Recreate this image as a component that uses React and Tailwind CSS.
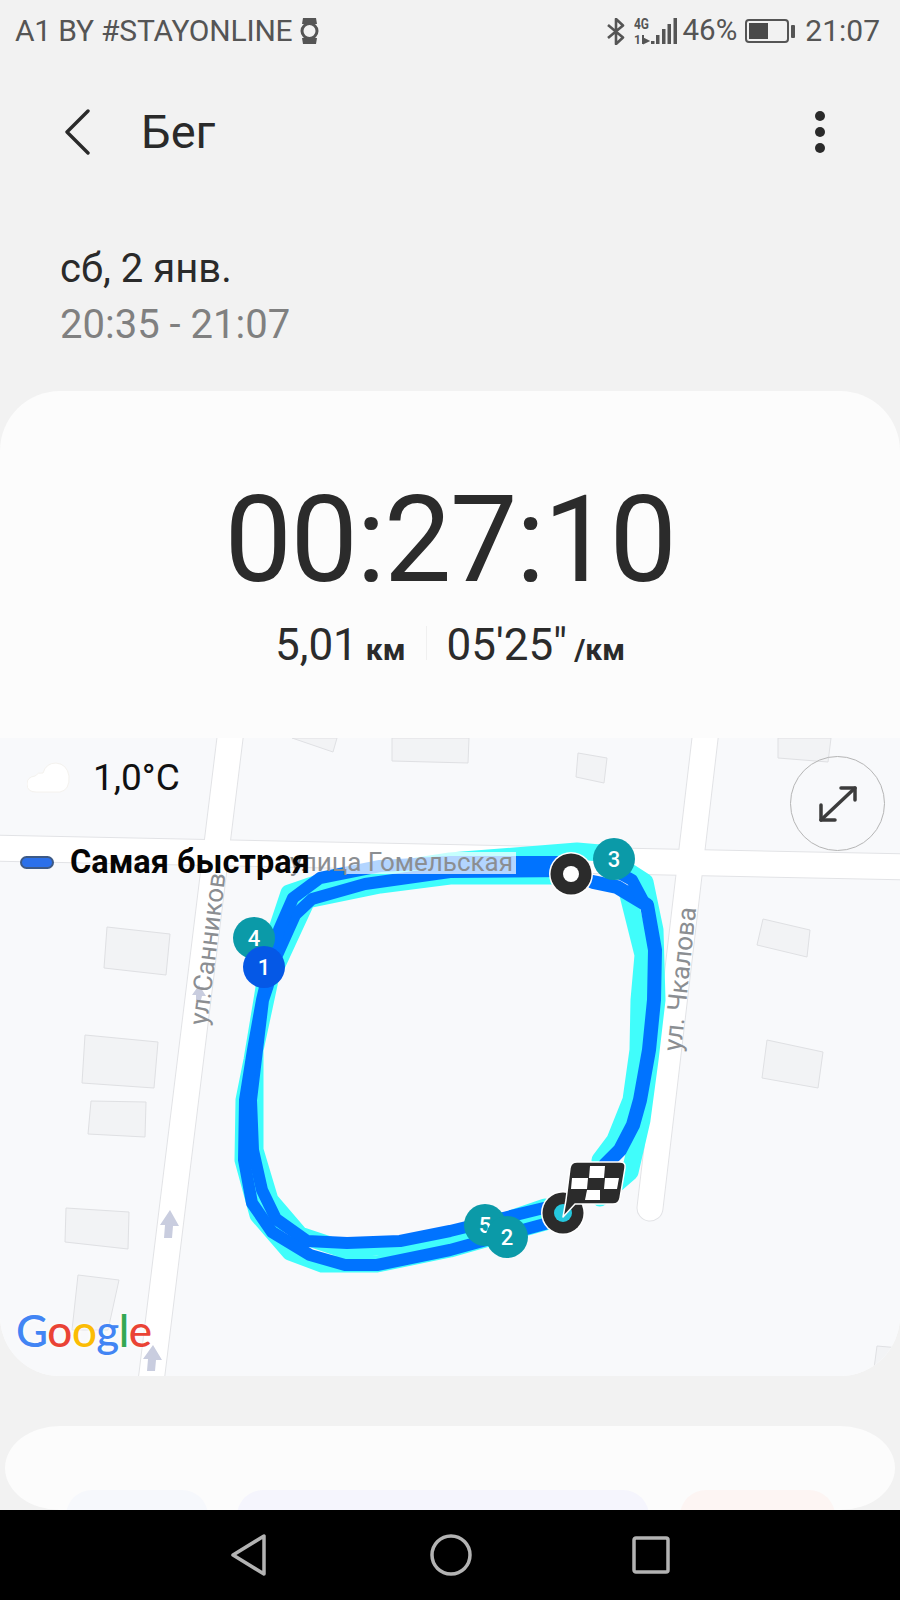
const roads = ["M231 730 L150 1390", "M706 730 L650 1208", "M-10 848 L910 867"]

const buildings = [
  "292,738 333,752 337,738",
  "392,738 469,738 468,763 392,761",
  "578,753 607,758 604,783 576,777",
  "778,738 831,738 828,762 778,758",
  "763,919 810,930 807,957 757,945",
  "767,1040 823,1052 818,1088 762,1078",
  "107,927 170,934 166,975 104,968",
  "85,1035 158,1042 154,1088 82,1083",
  "91,1101 146,1102 145,1137 88,1134",
  "66,1208 129,1212 128,1249 65,1242",
  "78,1275 119,1280 108,1330 72,1330",
  "877,1346 900,1348 900,1376 873,1376",
]

const Pin = ({ x, y, n, color = "#0b9aa8" }) => (
  <g>
    <circle cx={x} cy={y} r="21" fill={color} />
    <text x={x} y={y + 8} textAnchor="middle" fontSize="22" fontWeight="500" fill="#ffffff" fontFamily="Roboto, sans-serif">{n}</text>
  </g>
)

const RouteMap = () => (
  <svg viewBox="0 738 900 638" className="block w-[900px] h-[638px]">
    <rect x="0" y="738" width="900" height="638" fill="#f8f9fb" />
    {roads.map((d) => (
      <path key={d} d={d} fill="none" stroke="#e2e3e6" strokeWidth="27" strokeLinecap="round" />
    ))}
    {roads.map((d) => (
      <path key={d + "w"} d={d} fill="none" stroke="#ffffff" strokeWidth="25" strokeLinecap="round" />
    ))}
    {buildings.map((p) => (
      <polygon key={p} points={p} fill="#f2f3f5" stroke="#dfe0e3" strokeWidth="1" />
    ))}
    <path d="M170 1210 L179 1226 L173 1226 L172 1238 L164 1238 L165 1225 L160 1225 Z" fill="#c9cddf" />
    <path d="M153 1345 L162 1360 L156 1360 L155 1371 L147 1371 L148 1359 L143 1359 Z" fill="#c9cddf" />
    <path d="M199 985 L206 996 L202 996 L201 1000 L196 1000 L196 995 L192 995 Z" fill="#c9cddf" />

    <text transform="translate(207 1026) rotate(-83)" fontSize="26" fill="#8b8e92" fontFamily="Roboto, sans-serif">ул.Санников</text>
    <text transform="translate(681 1052) rotate(-84)" fontSize="26" fill="#8b8e92" fontFamily="Roboto, sans-serif">ул. Чкалова</text>

    <g fill="none" stroke="#40fdfb" strokeWidth="17" strokeLinejoin="round" strokeLinecap="round">
      <path d="M545 1222 L450 1249 L377 1264 L322 1264 L290 1252 L258 1215 L243 1160 L244 1100 L252 1060 L262 1000 L270 950 L289 893 L327 880 L450 861 L577 851 L600 853 L645 882 L655 930 L657 1000 L650 1060 L642 1120 L630 1172 L600 1198" />
      <path d="M628 895 L643 955 L639 1000 L638 1050 L631 1100 L615 1140 L600 1160" />
      <path d="M545 1207 L450 1240 L345 1250 L300 1235 L270 1200 L255 1150 L255 1050 L270 980 L307 900 L380 885 L450 876 L560 876" />
    </g>
    <g fill="none" stroke="#0073ff" strokeWidth="12" strokeLinejoin="round" strokeLinecap="round">
      <path d="M548 1207 L450 1231 L400 1241 L347 1243 L307 1241 L276 1219 L262 1190 L253 1150 L251 1100 L257 1050 L263 1000 L268 985 L277 955 L295 915 L312 899 L365 884 L450 872 L570 871" />
      <path d="M552 1222 L450 1250 L377 1265 L345 1265 L310 1255 L272 1232 L252 1203 L244 1160 L245 1100 L253 1050 L262 1000 L268 975 L279 930 L293 898 L320 878 L380 866 L450 862 L570 862" />
      <path strokeWidth="14" d="M593 882 L617 887 L647 905 L655 950 L654 1000 L649 1050 L640 1100 L633 1125 L620 1150 L605 1165" />
      <path d="M610 868 L632 880 L648 910" />
    </g>

    <rect x="345" y="852" width="171" height="22" fill="#ffffff" opacity="0.7" />
    <text x="290" y="871" fontSize="26" fill="#8b8e92" fontFamily="Roboto, sans-serif">улица Гомельская</text>

    <Pin x={614} y={859} n="3" />
    <circle cx="571" cy="874" r="22" fill="#ffffff" />
    <circle cx="571" cy="874" r="20.5" fill="#2b2b2b" />
    <circle cx="571" cy="874" r="8" fill="#ffffff" />

    <Pin x={254} y={938} n="4" />
    <Pin x={264} y={967} n="1" color="#0558e6" />
    <Pin x={485} y={1225} n="5" />
    <Pin x={507} y={1237} n="2" />

    <circle cx="563" cy="1213" r="22" fill="#ffffff" />
    <circle cx="563" cy="1213" r="20.5" fill="#2b2b2b" />
    <circle cx="563" cy="1213" r="9" fill="#25c8de" />
    <path d="M577 1162 L620 1162 Q626 1162 625 1168 L620 1198 Q619 1204 613 1204 L575 1204 L563 1217 L566 1200 L570 1168 Q571 1162 577 1162 Z" fill="#2b2b2b" stroke="#ffffff" strokeWidth="1.5" strokeLinejoin="round" />
    <g fill="#ffffff">
      <polygon points="590,1166 605,1166 604,1178 589,1178" />
      <polygon points="572,1178 588,1178 587,1189 571,1189" />
      <polygon points="605,1178 619,1178 617,1189 604,1189" />
      <polygon points="587,1190 600,1190 600,1200 585,1200" />
    </g>
  </svg>
)

const Legend = () => (
  <div className="absolute left-[20px] top-[104px] flex items-center gap-[16px]">
    <span className="w-[34px] h-[13px] rounded-full bg-[#2b70ea] border-2 border-[#3d5a86]" />
    <span className="text-[32.5px] leading-[40px] font-bold text-[#050505]">Самая быстрая</span>
  </div>
)

const Weather = () => (
  <div className="absolute left-[27px] top-[18px] flex items-center gap-[23px]">
    <svg width="43" height="32" viewBox="0 0 43 32">
      <path d="M9 30 Q0 30 0 22 Q0 15 8 14 Q11 10 16 11 Q19 1 29 1 Q40 2 42 14 Q43 28 33 30 Z" fill="#ffffff" stroke="#f4f2ee" strokeWidth="1" />
    </svg>
    <span className="text-[37px] leading-[44px] text-[#111111]">1,0°C</span>
  </div>
)

const ExpandButton = () => (
  <button className="absolute left-[790px] top-[18px] w-[95px] h-[95px] rounded-full border border-[#b5b5b5] flex items-center justify-center">
    <svg width="40" height="38" viewBox="0 0 40 38" fill="none" stroke="#3c3c3c" strokeWidth="3.5" strokeLinecap="round" strokeLinejoin="round">
      <path d="M3 35 L37 3" />
      <path d="M23 3 L37 3 L37 15" />
      <path d="M3 20 L3 35 L17 35" />
    </svg>
  </button>
)

const GoogleLogo = () => (
  <div className="absolute left-[16px] top-[564px] text-[44px] leading-[56px] font-['Lato',sans-serif] font-medium tracking-[-0.5px] [text-shadow:0_0_4px_#fff]">
    <span className="text-[#4285f4]">G</span>
    <span className="text-[#ea4335]">o</span>
    <span className="text-[#fbbc05]">o</span>
    <span className="text-[#4285f4]">g</span>
    <span className="text-[#34a853]">l</span>
    <span className="text-[#ea4335]">e</span>
  </div>
)

const StatusBar = () => (
  <div className="h-[62px] pl-[15px] pr-[20px] flex items-center justify-between text-[#555555] text-[30px]">
    <div className="flex items-center gap-[8px]">
      <span className="leading-[36px] tracking-[-0.2px]">A1 BY #STAYONLINE</span>
      <svg width="19" height="26" viewBox="0 0 19 26">
        <path d="M3 0 H16 L17 6 H2 Z M2 20 H17 L16 26 H3 Z" fill="#555555" />
        <circle cx="9.5" cy="13" r="7.5" fill="none" stroke="#555555" strokeWidth="3" />
      </svg>
    </div>
    <div className="flex items-center">
      <svg width="18" height="27" viewBox="0 0 18 27" fill="none" stroke="#555555" strokeWidth="2.6" strokeLinejoin="round" className="mr-[9px]">
        <path d="M1 7 L16 19.5 L9 26 V1 L16 7.5 L1 20" />
      </svg>
      <svg width="43" height="32" viewBox="0 0 43 32" className="mr-[6px] mb-[-4px]">
        <text x="0" y="12" fontSize="14" fontWeight="700" fill="#555555" fontFamily="Roboto, sans-serif" textLength="15" lengthAdjust="spacingAndGlyphs">4G</text>
        <text x="0" y="27" fontSize="12" fontWeight="700" fill="#555555" fontFamily="Roboto, sans-serif">1</text>
        <path d="M9 18 V27 M10 22 L14 24 L10 26 Z" stroke="#555555" strokeWidth="2" fill="#555555" />
        <rect x="17" y="24" width="3.5" height="3" fill="#555555" />
        <rect x="22" y="18" width="3.5" height="9" fill="#555555" />
        <rect x="28" y="12" width="3.5" height="15" fill="#555555" />
        <rect x="33.5" y="7" width="3.5" height="20" fill="#555555" />
        <rect x="39.5" y="1" width="3.5" height="26" fill="#555555" />
      </svg>
      <span className="text-[29.5px] leading-[36px] mb-[2px]">46%</span>
      <div className="ml-[8px] w-[44px] h-[24px] rounded-[4px] border-2 border-[#555555] p-[2px] flex">
        <span className="w-[19px] bg-[#4a4a4a]" />
      </div>
      <span className="ml-[2px] w-[4px] h-[13px] rounded-[1px] bg-[#555555]" />
      <span className="ml-[10px] leading-[36px]">21:07</span>
    </div>
  </div>
)

const Header = () => (
  <div className="h-[140px] pl-[65px] pr-[75px] flex items-center justify-between">
    <div className="flex items-center gap-[51px]">
      <svg width="25" height="46" viewBox="0 0 25 46" fill="none" stroke="#2a2a2a" strokeWidth="3.4" strokeLinecap="round" strokeLinejoin="round">
        <path d="M23 2 L2 23 L23 44" />
      </svg>
      <span className="text-[47px] leading-[56px] text-[#2a2a2a]">Бег</span>
    </div>
    <div className="flex flex-col gap-[6px]">
      <span className="w-[10px] h-[10px] rounded-full bg-[#2a2a2a]" />
      <span className="w-[10px] h-[10px] rounded-full bg-[#2a2a2a]" />
      <span className="w-[10px] h-[10px] rounded-full bg-[#2a2a2a]" />
    </div>
  </div>
)

const Summary = () => (
  <div className="h-[347px] flex flex-col items-center">
    <div className="mt-[79px] text-[120px] leading-[140px] text-[#2b2b2b] tracking-[-1.5px]">00:27:10</div>
    <div className="mt-[9px] flex items-baseline text-[#2b2b2b]">
      <span className="text-[44px] leading-[52px]">5,01</span>
      <span className="ml-[8px] text-[30px] font-bold">км</span>
      <span className="mx-[20px] w-px h-[34px] bg-[#f0f0f0]" />
      <span className="text-[44px] leading-[52px]">05'25"</span>
      <span className="ml-[7px] text-[30px] font-bold">/км</span>
    </div>
  </div>
)

const BottomCard = () => (
  <div className="mt-[50px] mx-[5px] h-[84px] bg-[#fcfcfc] rounded-[55px/42px] relative flex gap-[29px] pl-[61px] pt-[64px]">
    <div className="w-[142px] h-[60px] rounded-t-[26px] bg-[#f6f8fc]" />
    <div className="w-[412px] h-[60px] rounded-t-[26px] bg-[#f5f5fd]" />
    <div className="ml-[2px] w-[155px] h-[60px] rounded-t-[26px] bg-[#fdf5f3]" />
  </div>
)

const NavBar = () => (
  <div className="h-[90px] shrink-0 bg-black flex items-center justify-center z-10">
    <svg width="36" height="42" viewBox="0 0 36 42" fill="none" stroke="#b3b3b3" strokeWidth="3.5" strokeLinejoin="round">
      <path d="M33 2 V40 L2 21 Z" />
    </svg>
    <svg width="42" height="42" viewBox="0 0 42 42" fill="none" stroke="#b3b3b3" strokeWidth="3.5" className="ml-[163px]">
      <circle cx="21" cy="21" r="19" />
    </svg>
    <svg width="38" height="38" viewBox="0 0 38 38" fill="none" stroke="#b3b3b3" strokeWidth="3.5" strokeLinejoin="round" className="ml-[160px]">
      <rect x="2" y="2" width="34" height="34" rx="2" />
    </svg>
  </div>
)

export default function App() {
  return (
    <div className="w-[900px] h-[1600px] bg-[#f2f2f2] flex flex-col overflow-hidden font-['Roboto',sans-serif]">
      <div className="flex-1 overflow-hidden">
        <StatusBar />
        <Header />
        <div className="h-[189px] pl-[60px] pt-[44px]">
          <div className="text-[40px] leading-[46px] text-[#2a2a2a]">сб, 2 янв.</div>
          <div className="mt-[10px] text-[40px] leading-[46px] text-[#808080]">20:35 - 21:07</div>
        </div>
        <div className="bg-[#fcfcfc] rounded-[60px] overflow-hidden">
          <Summary />
          <div className="relative">
            <RouteMap />
            <Weather />
            <Legend />
            <ExpandButton />
            <GoogleLogo />
          </div>
        </div>
        <BottomCard />
      </div>
      <NavBar />
    </div>
  )
}
